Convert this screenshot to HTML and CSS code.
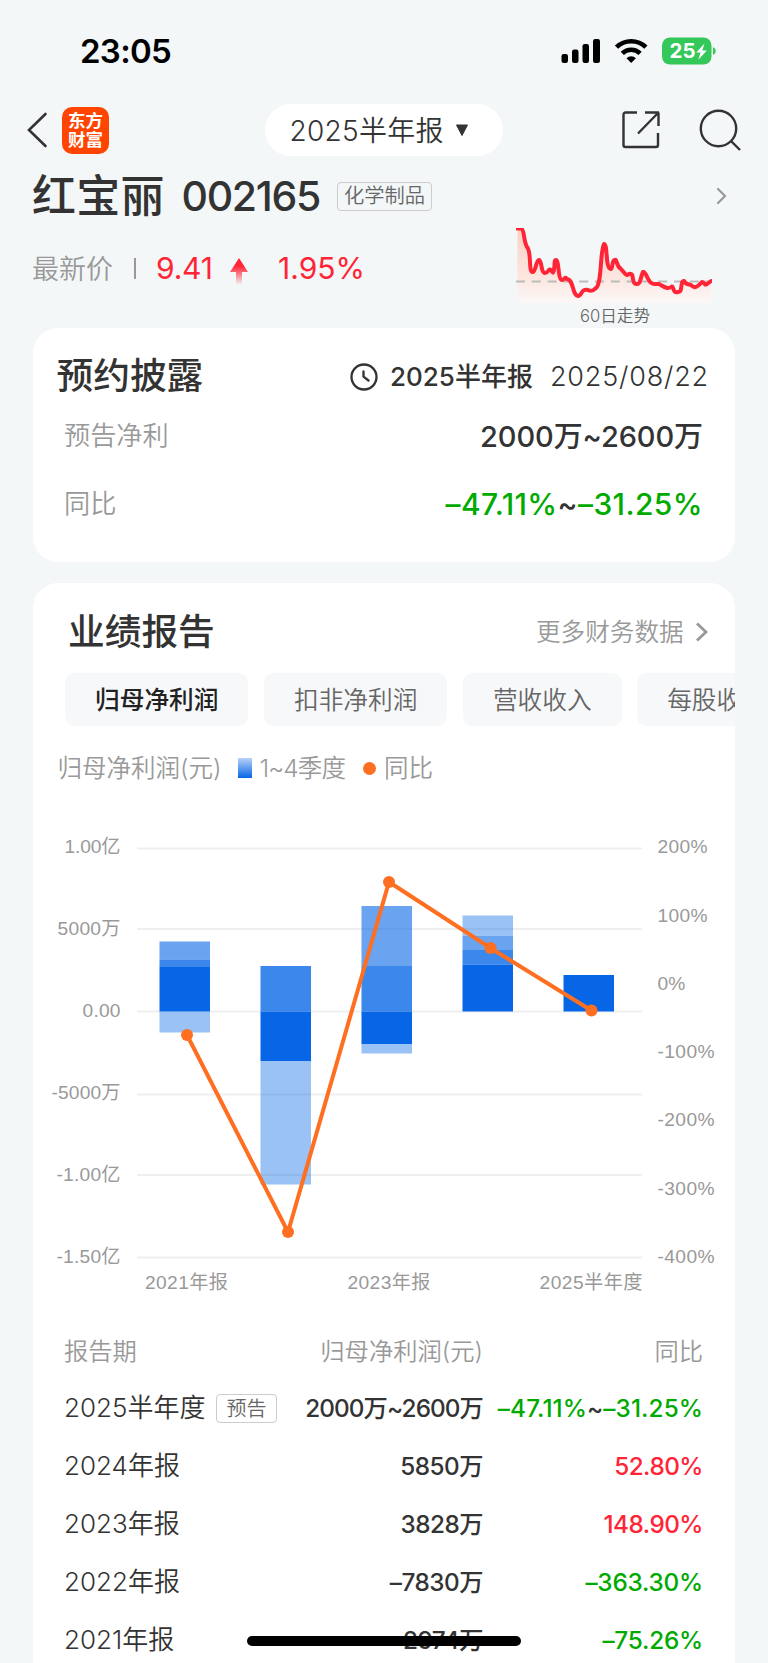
FILE: index.html
```html
<!DOCTYPE html>
<html lang="zh-CN">
<head>
<meta charset="utf-8">
<title>红宝丽 002165</title>
<link rel="stylesheet" href="styles.css">
</head>
<body>
<div class="screen">
  <header class="status">
    <span class="time">23:05</span>
    <svg class="status-icons" width="160" height="32" viewBox="0 0 160 32">
      <g fill="#000">
        <rect x="1.500" y="19" width="6.500" height="9" rx="2.200"/>
        <rect x="12" y="14.500" width="6.500" height="13.500" rx="2.200"/>
        <rect x="22.500" y="9" width="6.500" height="19" rx="2.200"/>
        <rect x="33" y="4" width="7" height="24" rx="2.200"/>
      </g>
      <g fill="none" stroke="#000" stroke-width="4.600">
        <path d="M56.500 12.200a21 21 0 0 1 29.400 0"/>
        <path d="M62.300 18.300a12.800 12.800 0 0 1 17.800 0"/>
      </g>
      <path d="M66.500 23.200a6.800 6.800 0 0 1 9.400 0l-4.700 4.900z"/>
      <rect x="102" y="2.500" width="49.500" height="27" rx="8" fill="#34c759"/>
      <path d="M153 12.200c3.600.8 3.600 6.800 0 7.600z" fill="#34c759"/>
      <text class="battery" x="109.500" y="23.200" textLength="26" lengthAdjust="spacingAndGlyphs">25</text>
      <path d="M144.500 8.500l-8.300 9h4.400l-2.300 7.200 8.600-9.300h-4.600z" fill="#fff"/>
    </svg>
  </header>

  <nav class="nav">
    <svg class="back" width="22" height="38" viewBox="0 0 22 38"><path d="M19.500 3L3 19l16.500 16" fill="none" stroke="#333" stroke-width="2.600" stroke-linecap="round"/></svg>
    <div class="logo"><span>东方</span><span>财富</span></div>
    <div class="period"><span class="period-text">2025半年报</span><svg width="14" height="13" viewBox="0 0 14 13"><path d="M1.500 1h11L7 11.500z" fill="#333" stroke="#333" stroke-linejoin="round"/></svg></div>
    <svg class="share" width="40" height="40" viewBox="0 0 40 40" fill="none" stroke="#333" stroke-width="2.400"><path d="M16 2.500H4.500a2 2 0 0 0-2 2V35a2 2 0 0 0 2 2H35a2 2 0 0 0 2-2V23"/><path d="M24 2.500h14M37.500 2.500V16M37.500 2.500L17 23.500"/></svg>
    <svg class="search" width="44" height="44" viewBox="0 0 44 44" fill="none" stroke="#333" stroke-width="2.400"><circle cx="20.500" cy="20.500" r="17.700"/><path d="M33 33l9 9"/></svg>
  </nav>

  <section class="stock">
    <div class="stock-name">
      <span class="name">红宝丽</span><span class="code">002165</span><span class="industry">化学制品</span>
      <svg class="go" width="12" height="20" viewBox="0 0 12 20"><path d="M2 3l7 7-7 7" fill="none" stroke="#999" stroke-width="2.200" stroke-linecap="round"/></svg>
    </div>
    <div class="quote">
      <span class="quote-label">最新价</span><i class="divider"></i><span class="price">9.41</span>
      <svg class="up" width="18" height="27" viewBox="0 0 18 27"><defs><linearGradient id="up" x1="0" y1="0" x2="0" y2="1"><stop offset=".3" stop-color="#ff2436"/><stop offset="1" stop-color="#ff2436" stop-opacity="0"/></linearGradient></defs><path d="M9 0l9 14h-6v13H6V14H0z" fill="url(#up)"/></svg>
      <span class="rate">1.95%</span>
      <figure class="trend">
        <svg width="196" height="76" viewBox="0 0 196 76">
          <defs><linearGradient id="area" x1="0" y1="0" x2="0" y2="1"><stop offset="0" stop-color="#fbcfc2"/><stop offset=".65" stop-color="#fce6df"/><stop offset="1" stop-color="#fbf8f8"/></linearGradient></defs>
          <path d="M1.500 0H7C9 3 8 12 11 19C16 24 12 45 17 44C20 43 20 32 23 32C26 33 25 45 29 45C33 45 32 40 35 42C37 45 37 46 38 42C39 35 38 32 40 32C43 32 42 52 46 52C50 51 48 48 51 51C58 52 56 67 62 68C66 68 65 60 72 62C76 64 78 62 80 60C86 56 84 22 88 16C92 16 89 41 95 41C97 40 96 31 99 32C101 31 100 38 105 41C110 47 110 48 113 46C119 44 115 56 120 56C125 57 124 50 127 44C131 43 131 56 138 56H143C147 58 151 62 155 59C158 56 156 66 162 64C167 65 164 52 168 53C170 57 173 56 175 57C179 62 183 57 186 54C189 54 188 58 191 56L195 53V75H1.500z" fill="url(#area)"/>
          <path d="M0 53.500H196" stroke="#bbb" stroke-width="2" stroke-dasharray="9 6.800"/>
          <path d="M1.500 .5H5C9 2 7 12 11 19C16 24 12 45 17 44C20 43 20 32 23 32C26 33 25 45 29 45C33 45 32 40 35 42C37 45 37 46 38 42C39 35 38 32 40 32C43 32 42 52 46 52C50 51 48 48 51 51C58 52 56 67 62 68C66 68 65 60 72 62C76 64 78 62 80 60C86 56 84 22 88 16C92 16 89 41 95 41C97 40 96 31 99 32C101 31 100 38 105 41C110 47 110 48 113 46C119 44 115 56 120 56C125 57 124 50 127 44C131 43 131 56 138 56H143C147 58 151 62 155 59C158 56 156 66 162 64C167 65 164 52 168 53C170 57 173 56 175 57C179 62 183 57 186 54C189 54 188 58 191 56L195 53" fill="none" stroke="#ff2436" stroke-width="4" stroke-linejoin="round" stroke-linecap="round"/>
        </svg>
        <figcaption>60日走势</figcaption>
      </figure>
    </div>
  </section>

  <section class="card forecast">
    <div class="forecast-head">
      <h2>预约披露</h2>
      <svg class="clock" width="28" height="28" viewBox="0 0 28 28" fill="none" stroke="#333" stroke-width="2.300"><circle cx="14" cy="14" r="12.500"/><path d="M13.500 8.500v5.200l5 3.800" stroke-linecap="round" stroke-linejoin="round"/></svg>
      <span class="report">2025半年报</span><span class="date">2025/08/22</span>
    </div>
    <div class="pair"><span>预告净利</span><strong class="profit">2000万~2600万</strong></div>
    <div class="pair last"><span>同比</span><strong class="change"><b class="down">–47.11%</b>~<b class="down">–31.25%</b></strong></div>
  </section>

  <section class="card results">
    <div class="results-head">
      <h2>业绩报告</h2><span class="more">更多财务数据</span>
      <svg width="14" height="22" viewBox="0 0 14 22"><path d="M2 2.500l9 8.500-9 8.500" fill="none" stroke="#999" stroke-width="2.800"/></svg>
    </div>
    <div class="tabs"><span class="tab active">归母净利润</span><span class="tab">扣非净利润</span><span class="tab">营收收入</span><span class="tab">每股收益</span></div>
    <div class="legend"><span class="lg-title">归母净利润(元)</span><i class="swatch"></i><span class="lg-q">1~4季度</span><i class="dot"></i><span>同比</span></div>
    <svg class="chart" width="702" height="490" viewBox="33 820 702 490">
      <path d="M137 848.500H642M137 929H642M137 1011.500H642M137 1094.500H642M137 1175H642M137 1257.500H642" stroke="#efefef" stroke-width="1.800"/>
      <g fill="#0666e6">
        <path fill-opacity=".4" d="M159.500 1011.500H210V1032.500H159.500zM260.500 1061H311V1184.500H260.500zM361.500 1044H412V1053.500H361.500zM462.500 915.500H513V936H462.500z"/>
        <path fill-opacity=".6" d="M159.500 941.500H210V959.500H159.500zM361.500 906H412V966H361.500zM462.500 936H513V950H462.500z"/>
        <path fill-opacity=".785" d="M159.500 959.500H210V967H159.500zM260.500 966H311V1011.500H260.500zM361.500 966H412V1011.500H361.500zM462.500 950H513V964.500H462.500z"/>
        <path d="M159.500 967H210V1011.500H159.500zM260.500 1011.500H311V1061H260.500zM361.500 1011.500H412V1044H361.500zM462.500 964.500H513V1011.500H462.500zM563.500 975H614V1011.500H563.500z"/>
      </g>
      <path d="M187 1035L288 1232L389 882L490.500 948L591.500 1010.500" fill="none" stroke="#ff6f21" stroke-width="4"/>
      <g fill="#ff6f21"><circle cx="187" cy="1035" r="6"/><circle cx="288" cy="1232" r="6"/><circle cx="389" cy="882" r="6"/><circle cx="490.500" cy="948" r="6"/><circle cx="591.500" cy="1010.500" r="6"/></g>
      <g class="axis" text-anchor="end">
        <text x="120.500" y="853" textLength="56">1.00亿</text><text x="120.500" y="935" textLength="63">5000万</text><text x="120.500" y="1017" textLength="38">0.00</text><text x="120.500" y="1098.500" textLength="69">-5000万</text><text x="120.500" y="1180.500" textLength="64">-1.00亿</text><text x="120.500" y="1262.500" textLength="64">-1.50亿</text>
      </g>
      <g class="axis">
        <text x="657.500" y="853" textLength="50">200%</text><text x="657.500" y="921.500" textLength="50">100%</text><text x="657.500" y="989.500">0%</text><text x="657.500" y="1058" textLength="57">-100%</text><text x="657.500" y="1126" textLength="57">-200%</text><text x="657.500" y="1194.500" textLength="57">-300%</text><text x="657.500" y="1262.500" textLength="57">-400%</text>
        <text x="145" y="1289" textLength="83">2021年报</text><text x="347.500" y="1289" textLength="83">2023年报</text><text x="539.500" y="1289" textLength="103">2025半年度</text>
      </g>
    </svg>
    <div class="table">
      <div class="row head"><span>报告期</span><span>归母净利润(元)</span><span>同比</span></div>
      <div class="row"><span class="term"><em>2025半年度</em><i class="tag">预告</i></span><strong class="range">2000万~2600万</strong><strong class="down wide">–47.11%<b>~</b>–31.25%</strong></div>
      <div class="row"><span><em>2024年报</em></span><strong>5850万</strong><strong class="rise">52.80%</strong></div>
      <div class="row"><span><em>2023年报</em></span><strong>3828万</strong><strong class="rise">148.90%</strong></div>
      <div class="row"><span><em>2022年报</em></span><strong>–7830万</strong><strong class="down">–363.30%</strong></div>
      <div class="row"><span><em>2021年报</em></span><strong>2974万</strong><strong class="down">–75.26%</strong></div>
    </div>
  </section>
  <div class="home"></div>
</div>
</body>
</html>
```
FILE: styles.css
```css
* { box-sizing: border-box; }
body { margin: 0; }
.screen {
  position: relative;
  width: 768px;
  height: 1663px;
  overflow: hidden;
  background: #f3f7f8;
  color: #333;
  font-family: Inter, "Noto Sans CJK SC", sans-serif;
  line-height: 1;
  white-space: nowrap;
}
h2, figure { margin: 0; }
h2 { font-size: 36.700px; font-weight: 500; }
em, i { font-style: normal; }
svg { display: block; flex: none; }

.status { height: 104px; padding: 35px 0 0 80px; display: flex; }
.time { width: 480px; color: #000; font-size: 33px; font-weight: 600; line-height: 33px; letter-spacing: -.7px; }
.battery { fill: #fff; font-size: 20.500px; font-weight: 700; }

.nav { height: 52px; padding-left: 26px; display: flex; align-items: center; }
.logo {
  width: 47px; height: 47px; margin-left: 14px; border-radius: 10px;
  background: #ff4500; color: #fff; font-weight: 700; font-size: 17.500px;
  display: flex; flex-direction: column; align-items: center; justify-content: center; gap: 2px;
}
.period {
  width: 238px; height: 52px; margin-left: 156px; padding-left: 24.500px; border-radius: 26px;
  background: #fff; display: flex; align-items: center; font-size: 28px;
}
.period-text { width: 165.500px; padding-top: 1px; font-weight: 350; letter-spacing: .3px; }
.share { margin-left: 117.500px; }
.search { margin-left: 37.500px; }

.stock { height: 172px; padding-left: 32px; }
.stock-name { height: 80px; display: flex; align-items: center; }
.name { width: 149.500px; font-size: 44px; font-weight: 500; letter-spacing: .3px; }
.code { width: 155.500px; font-size: 41px; font-weight: 500; letter-spacing: -1.300px; }
.industry {
  width: 95px; height: 29px; border: 1.500px solid #ccc; border-radius: 4px;
  color: #666; font-size: 20.300px; font-weight: 350; line-height: 26px; text-align: center;
}
.go { margin-left: 284px; }
.quote { height: 92px; display: flex; align-items: flex-start; }
.quote-label { width: 102px; margin-top: 20px; color: #999; font-size: 27px; font-weight: 350; }
.divider { width: 2px; height: 21px; margin-top: 22px; background: #999; }
.price, .rate { color: #ff2436; font-size: 30px; margin-top: 17px; }
.price { width: 74px; margin-left: 20px; letter-spacing: -.2px; }
.up { margin-top: 22px; }
.rate { width: 238px; margin-left: 30px; }
.trend { width: 196px; margin-top: -8px; }
.trend figcaption { margin-top: 4px; padding-left: 2px; color: #666; font-size: 16.600px; font-weight: 350; text-align: center; }

.card { width: 702px; margin-left: 33px; border-radius: 25px; background: #fff; }
.forecast { height: 234px; padding-top: 20.500px; }
.forecast-head { height: 56px; padding-left: 23.500px; display: flex; align-items: center; }
.forecast-head h2 { width: 293.500px; }
.report { width: 160px; margin-left: 12px; font-size: 26px; font-weight: 500; }
.date { font-size: 27px; font-weight: 300; letter-spacing: .8px; }
.pair { height: 64px; padding: 0 32px 0 31px; display: flex; align-items: center; justify-content: space-between; color: #999; font-size: 26.200px; font-weight: 350; }
.pair.last { height: 71px; }
.pair strong { color: #333; font-size: 29px; font-weight: 500; letter-spacing: -.1px; }
.pair .change { font-size: 30px; letter-spacing: .4px; }
.pair b, .row b { font-weight: inherit; }
.pair .down, .row .down { color: #0a0; }

.results { height: 1100px; margin-top: 21px; overflow: hidden; }
.results-head { height: 90px; padding: 8px 0 0 35px; display: flex; align-items: center; }
.results-head h2 { width: 468px; padding-top: 1px; }
.more { width: 159px; color: #999; font-size: 24.600px; font-weight: 350; }
.tabs { height: 53px; margin-left: 32px; display: flex; gap: 15.500px; }
.tab { flex: none; height: 53px; padding: 0 30px; border-radius: 9px; background: #f7f8fa; color: #666; font-size: 24.700px; font-weight: 350; line-height: 55px; }
.tab.active { color: #222; font-weight: 500; }
.legend { height: 84px; padding-left: 24.500px; display: flex; align-items: center; color: #999; font-size: 24.500px; font-weight: 350; }
.lg-title { width: 180px; }
.swatch { width: 14px; height: 20px; background: linear-gradient(#b8d2f8, #0666e6); }
.lg-q { width: 94px; margin-left: 8px; letter-spacing: -.9px; }
.dot { width: 13px; height: 13px; margin: 0 8.500px 0 9px; border-radius: 50%; background: #ff6f21; }
.chart { margin-top: 10px; }
.axis { fill: #999; font-family: "Liberation Sans", "Noto Sans CJK SC", sans-serif; font-size: 19.200px; }

.table { padding: 13px 32px 0 31px; }
.row { height: 58px; display: grid; grid-template-columns: 167px 252px 220px; align-items: center; font-size: 24.300px; }
.row > :not(:first-child) { justify-self: end; }
.row.head { height: 56px; color: #999; font-weight: 350; }
.row em { font-size: 26px; font-weight: 350; }
.row strong { font-weight: 500; letter-spacing: -.5px; }
.row .range { letter-spacing: -.9px; }
.row .rise { color: #ff2436; }
.row .down { letter-spacing: -.2px; }
.row .wide { letter-spacing: .1px; }
.row .wide b { color: #333; }
.term { display: flex; align-items: center; }
.term em { width: 152px; flex: none; }
.tag { width: 61px; height: 29px; border: 1px solid #ccc; border-radius: 4px; color: #666; font-size: 20px; font-weight: 350; line-height: 28px; text-align: center; flex: none; }
.home { position: absolute; left: 247px; top: 1636px; width: 274px; height: 10px; border-radius: 5px; background: #000; }
```
